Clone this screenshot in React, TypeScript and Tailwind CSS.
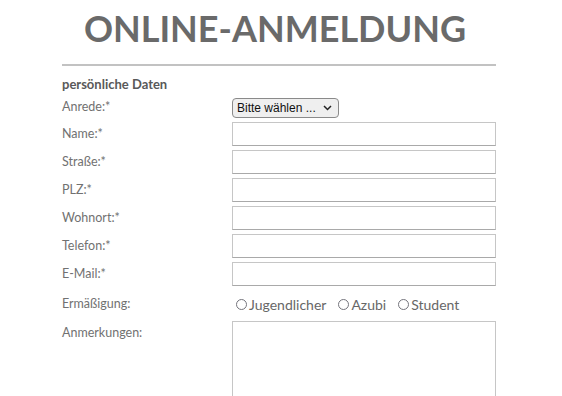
import React from "react"

const fields = ["Name:*", "Straße:*", "PLZ:*", "Wohnort:*", "Telefon:*", "E-Mail:*"]

function Radio({ label }: { label: string }) {
  return (
    <label className="flex items-center gap-[2px]">
      <span className="w-[11px] h-[11px] rounded-full border-[1.5px] border-[#74747c] bg-white" />
      <span>{label}</span>
    </label>
  )
}

export default function App() {
  return (
    <div className="bg-white h-[396px] overflow-hidden font-['Lato','Open_Sans',sans-serif] text-[#717171]">
      <div className="ml-[62px] w-[434px]">
        {/* Heading */}
        <h1 className="h-[64px] pt-[4px] text-center text-[36px] font-bold text-[#6a6a6a] leading-[48px] pr-[8px]">
          ONLINE-ANMELDUNG
        </h1>
        <div className="h-[2px] bg-[#c2c2c2]" />

        <div className="pt-[8px] text-[13px] font-bold text-[#595959] leading-[20px]">persönliche Daten</div>

        <div className="flex flex-col gap-1 text-[12.5px]">
          {/* Anrede */}
          <div className="flex h-6 items-end">
            <div className="w-[170px] self-center pt-[2px]">Anrede:*</div>
            <div className="h-[20px] w-[107px] flex items-center justify-between rounded-[4px] border border-[#8a8a8a] bg-[#efefef] pl-[4px] pr-[6px] font-['Liberation_Sans',sans-serif] text-[12px] text-[#111]">
              <span>Bitte wählen ...</span>
              <svg width="9" height="6" viewBox="0 0 9 6">
                <path d="M1 1 L4.5 4.5 L8 1" fill="none" stroke="#222" strokeWidth="1.5" />
              </svg>
            </div>
          </div>

          {fields.map((f) => (
            <div key={f} className="flex h-6 items-center">
              <div className="w-[170px]">{f}</div>
              <div className="h-6 w-[264px] border border-[#c6c6c6] border-b-[#a9a9a9] bg-white" />
            </div>
          ))}

          {/* Ermäßigung */}
          <div className="flex h-[27px] items-center pt-[2px]">
            <div className="w-[170px]">Ermäßigung:</div>
            <div className="flex items-center gap-3 pl-1 text-[14px] text-[#676767]">
              <Radio label="Jugendlicher" />
              <Radio label="Azubi" />
              <Radio label="Student" />
            </div>
          </div>

          {/* Anmerkungen */}
          <div className="flex">
            <div className="w-[170px] pt-[3px]">Anmerkungen:</div>
            <div className="h-[90px] w-[264px] border border-[#c6c6c6] bg-white" />
          </div>
        </div>
      </div>
    </div>
  )
}
